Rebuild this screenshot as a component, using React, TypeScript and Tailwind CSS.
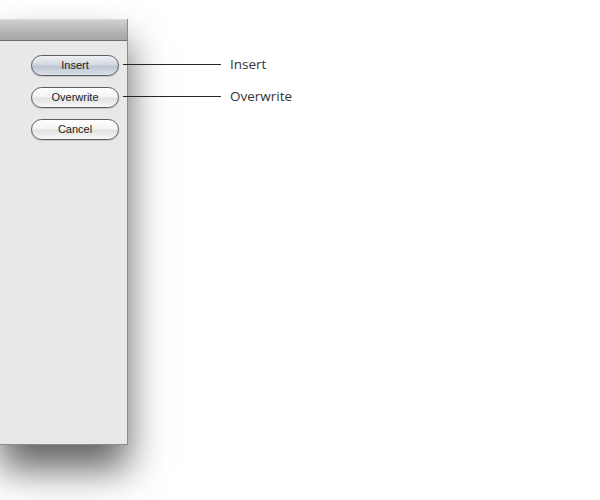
import React from "react";

// Aqua-style capsule button; the default one gets the blue-grey tint
const Capsule = ({ label, primary }: { label: string; primary?: boolean }) => (
  <button
    type="button"
    className={
      "flex h-[21px] w-[88px] items-center justify-center rounded-full border border-[#5c5c5c] text-[11px] leading-none text-[#1c1c1c] shadow-[0_1px_1px_rgba(0,0,0,0.15)] " +
      (primary
        ? "bg-[linear-gradient(180deg,#eef1f5_0%,#d3d9e2_45%,#bcc5d2_55%,#dbe1ea_100%)]"
        : "bg-[linear-gradient(180deg,#ffffff_0%,#f4f4f4_45%,#e2e2e2_55%,#f7f7f7_100%)]")
    }
    style={{ fontFamily: '"Liberation Sans", Arial, sans-serif' }}
  >
    {label}
  </button>
);

const Callout = ({ label, top }: { label: string; top: string }) => (
  <div className={"absolute left-[123px] flex h-[17px] items-center " + top}>
    <div className="h-px w-[98px] bg-[#262626]" />
    <span
      className="ml-[9px] text-[13.5px] text-[#333]"
      style={{ fontFamily: '"Open Sans", "DejaVu Sans", sans-serif' }}
    >
      {label}
    </span>
  </div>
);

export default function App() {
  return (
    <div className="relative h-[500px] w-[600px] overflow-hidden bg-white">
      <div className="pt-[19px]">
        {/* sheet panel */}
        <div className="flex h-[426px] w-[128px] flex-col border-r border-b border-[#8c8c8c] bg-[#e8e8e8] shadow-[0_24px_36px_rgba(0,0,0,0.62)]">
          <div className="h-[22px] border-t border-[#dcdcdc] border-b border-b-[#6e6e6e] bg-[linear-gradient(180deg,#cfcfcf_0%,#b4b4b4_60%,#a6a6a6_100%)]" />
          <div className="flex flex-col items-end gap-[11px] pt-[14px] pr-[8px]">
            <Capsule label="Insert" primary />
            <Capsule label="Overwrite" />
            <Capsule label="Cancel" />
          </div>
        </div>
      </div>

      <Callout label="Insert" top="top-[56px]" />
      <Callout label="Overwrite" top="top-[88px]" />
    </div>
  );
}
